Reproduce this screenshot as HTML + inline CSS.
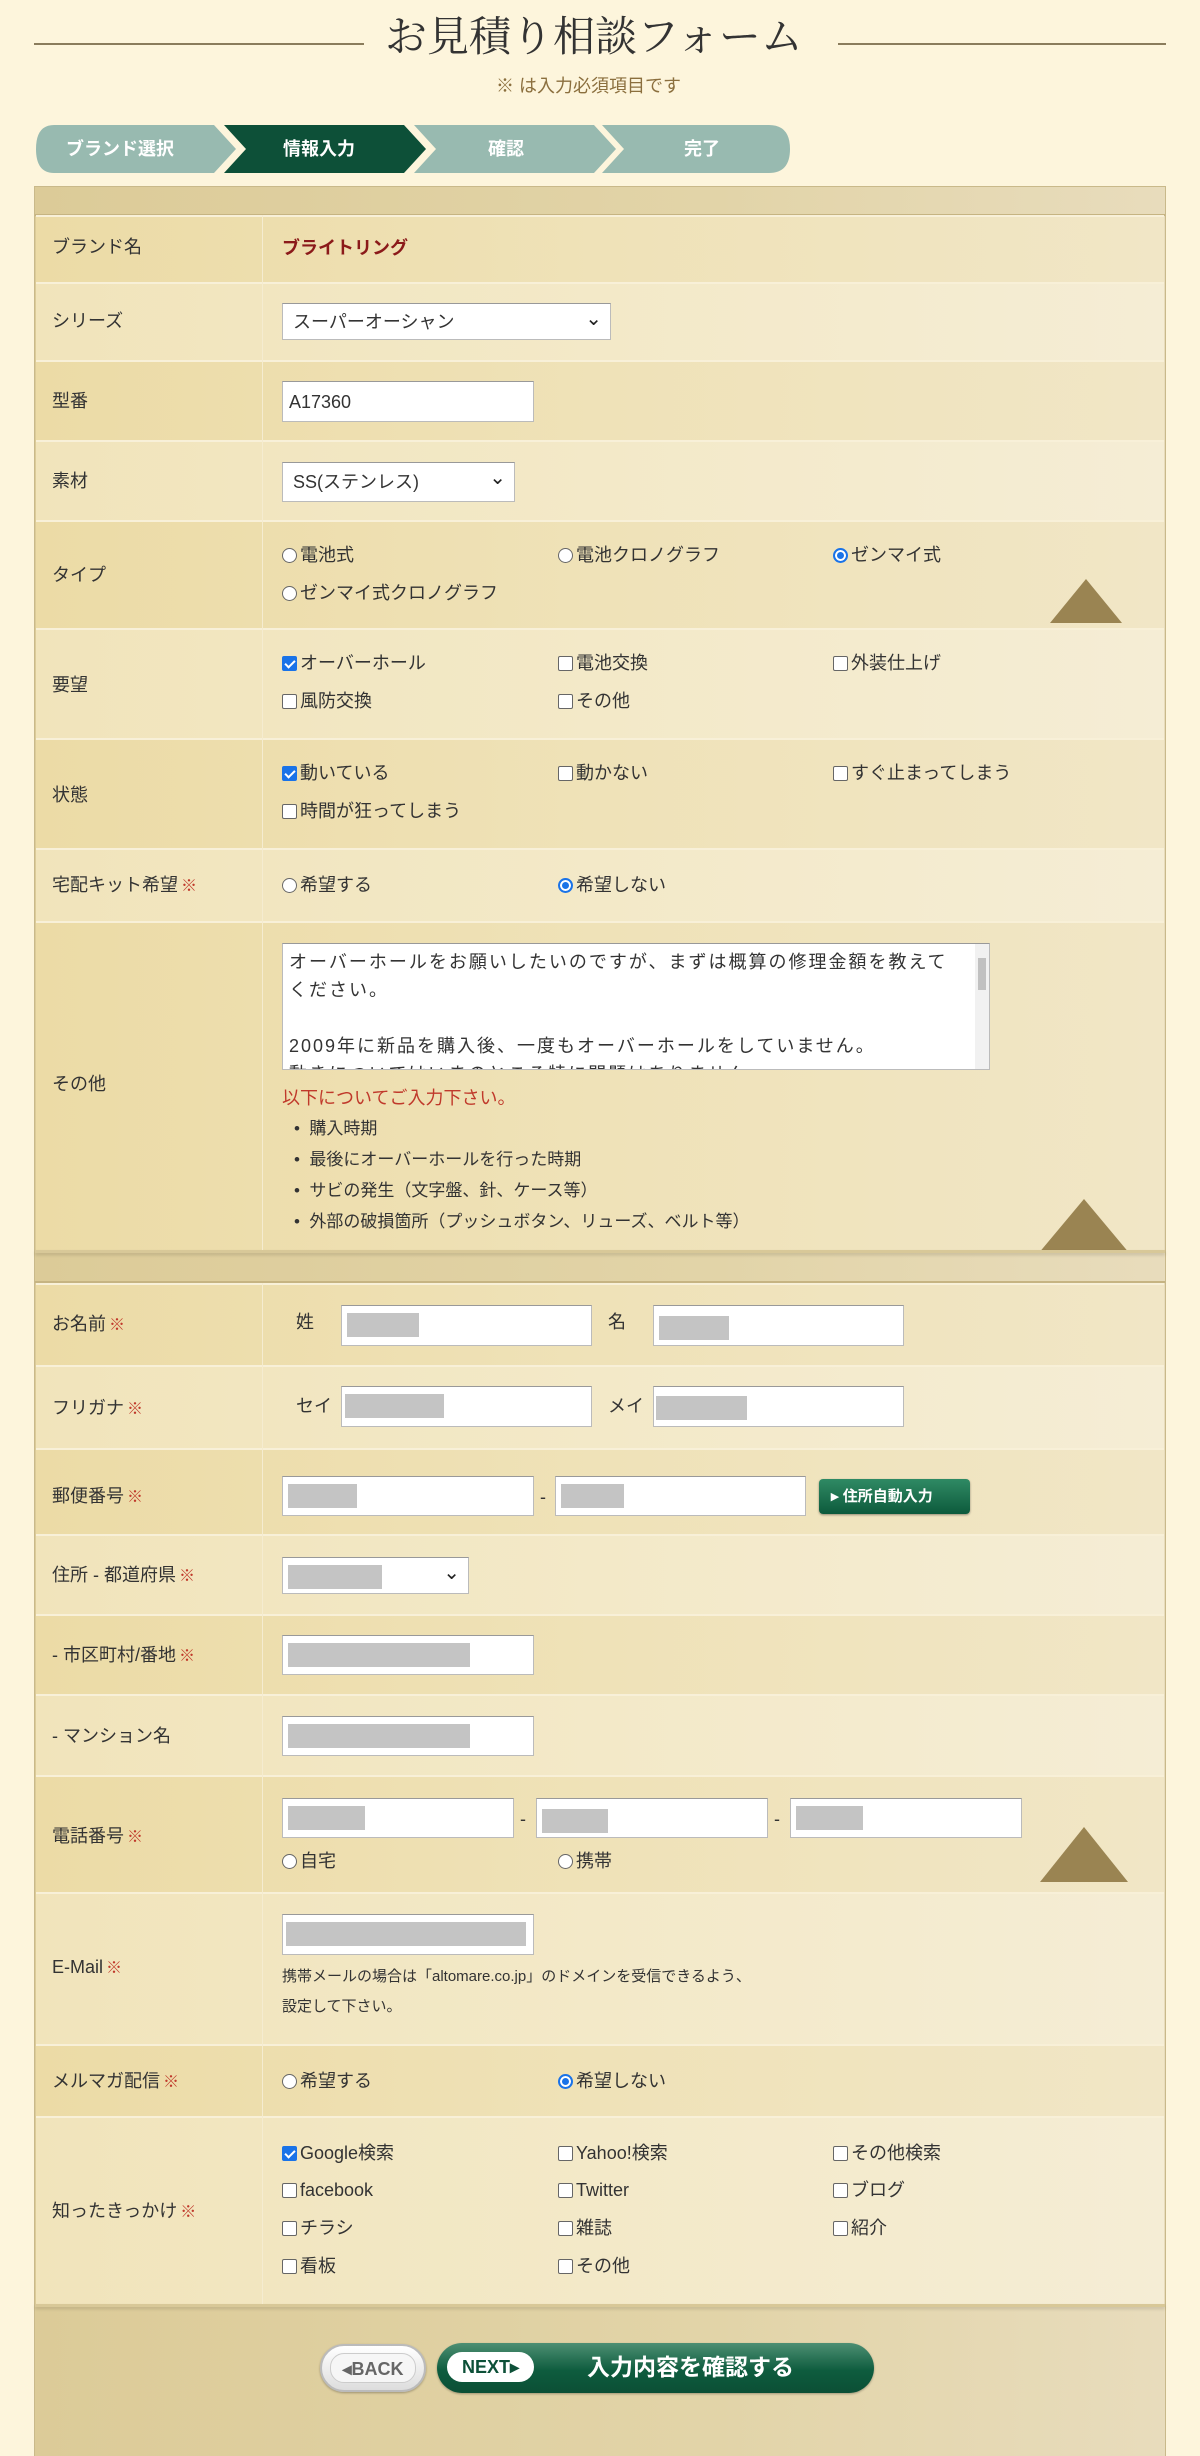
<!DOCTYPE html>
<html><head><meta charset="utf-8">
<style>
*{margin:0;padding:0;box-sizing:border-box}
body{width:1200px;height:2456px;background:#fdf5dc;font-family:"Liberation Sans","Noto Sans CJK JP",sans-serif;color:#333;position:relative;overflow:hidden}
.a{position:absolute}
.t{font-size:18px;white-space:nowrap;line-height:1}
.row{position:absolute;left:36px;width:1128px;border-top:2px solid #f8f0d8}
.d{background:linear-gradient(90deg,#ecdba6,#efe2b8 50%,#f1e6c6)}
.l{background:linear-gradient(90deg,#f1e4bb,#f3e9c8 50%,#f5edd5)}
.lab{position:absolute;left:16px;font-size:18px;white-space:nowrap;line-height:1}
.lab i{font-style:normal;color:#c0392b;font-size:16px;margin-left:3px}
.inp{position:absolute;background:#fff;border:1px solid #bbb;border-top-color:#999}
.g{position:absolute;left:5px;top:7px;height:24px;background:#c4c4c4}
.sel:after{content:"⌄";position:absolute;right:8px;top:2px;font-size:20px;color:#222}
.cb{display:inline-block;width:15px;height:15px;border:1px solid #666;border-radius:2px;background:#fff;vertical-align:-2px;margin-right:3px}
.cb.on{background:#1a73e8;border-color:#1a73e8;position:relative}
.cb.on:after{content:"";position:absolute;left:4px;top:1px;width:4px;height:8px;border:solid #fff;border-width:0 2px 2px 0;transform:rotate(45deg)}
.rd{display:inline-block;width:15px;height:15px;border:1px solid #666;border-radius:50%;background:#fff;vertical-align:-2px;margin-right:3px}
.rd.on{border:2px solid #1a73e8;box-shadow:inset 0 0 0 2px #fff;background:#1a73e8}
.tri{position:absolute;width:0;height:0;border-style:solid;border-color:transparent transparent #9a8452 transparent}
</style></head><body>

<div class="a" style="left:34px;top:43px;width:330px;height:2px;background:#8a7c5c"></div>
<div class="a" style="left:838px;top:43px;width:328px;height:2px;background:#8a7c5c"></div>
<div class="a t" style="left:385px;top:17px;font-size:42px;font-family:'Liberation Serif','Noto Serif CJK SC',serif;color:#333">お見積り相談フォーム</div>
<div class="a t" style="left:496px;top:77px;font-size:18px;color:#8b6f3e">※ は入力必須項目です</div>

<svg class="a" style="left:34px;top:123px" width="760" height="52">
<path d="M20 2 H180 L202 26 L180 50 H20 Q2 50 2 26 Q2 2 20 2Z" fill="#98bab0"/>
<path d="M190 2 H370 L392 26 L370 50 H190 L212 26Z" fill="#0d5038"/>
<path d="M380 2 H560 L582 26 L560 50 H380 L402 26Z" fill="#98bab0"/>
<path d="M568 2 H735 Q756 2 756 26 Q756 50 735 50 H568 L590 26Z" fill="#98bab0"/>
<text x="86" y="32" font-size="18" font-weight="bold" fill="#fff" text-anchor="middle" font-family="Liberation Sans,Noto Sans CJK JP,sans-serif">ブランド選択</text>
<text x="285" y="32" font-size="18" font-weight="bold" fill="#fff" text-anchor="middle" font-family="Liberation Sans,Noto Sans CJK JP,sans-serif">情報入力</text>
<text x="472" y="32" font-size="18" font-weight="bold" fill="#fff" text-anchor="middle" font-family="Liberation Sans,Noto Sans CJK JP,sans-serif">確認</text>
<text x="668" y="32" font-size="18" font-weight="bold" fill="#fff" text-anchor="middle" font-family="Liberation Sans,Noto Sans CJK JP,sans-serif">完了</text>
</svg>

<div class="a" style="left:34px;top:186px;width:1132px;height:2270px;background:linear-gradient(90deg,#dccb98,#e2d4a8 60%,#e8dcbc);border:1px solid #c9b98a;border-bottom:none"></div>
<div class="a" style="left:35px;top:214px;width:1130px;height:2px;background:#c6b482"></div>
<div class="a" style="left:262px;top:215px;width:1px;height:1035px;background:#f5ecd0;z-index:2"></div>

<div class="row d" style="top:215px;height:67px"><div class="lab" style="top:21px">ブランド名</div><div class="a t" style="left:246px;top:22px;color:#8b1a1a;font-weight:bold">ブライトリング</div></div>
<div class="row l" style="top:282px;height:78px"><div class="lab" style="top:28px">シリーズ</div>
 <div class="inp sel" style="left:246px;top:19px;width:329px;height:37px"><span class="a t" style="left:10px;top:9px">スーパーオーシャン</span></div></div>
<div class="row d" style="top:360px;height:80px"><div class="lab" style="top:30px">型番</div>
 <div class="inp" style="left:246px;top:19px;width:252px;height:41px"><span class="a t" style="left:6px;top:11px">A17360</span></div></div>
<div class="row l" style="top:440px;height:80px"><div class="lab" style="top:30px">素材</div>
 <div class="inp sel" style="left:246px;top:20px;width:233px;height:40px"><span class="a t" style="left:10px;top:10px">SS(ステンレス)</span></div></div>
<div class="row d" style="top:520px;height:108px"><div class="lab" style="top:44px">タイプ</div>
 <div class="a t" style="left:246px;top:24px"><span class="rd"></span>電池式</div>
 <div class="a t" style="left:522px;top:24px"><span class="rd"></span>電池クロノグラフ</div>
 <div class="a t" style="left:797px;top:24px"><span class="rd on"></span>ゼンマイ式</div>
 <div class="a t" style="left:246px;top:62px"><span class="rd"></span>ゼンマイ式クロノグラフ</div>
 <div class="tri" style="left:1014px;top:57px;border-width:0 36px 44px 36px"></div></div>
<div class="row l" style="top:628px;height:110px"><div class="lab" style="top:46px">要望</div>
 <div class="a t" style="left:246px;top:24px"><span class="cb on"></span>オーバーホール</div>
 <div class="a t" style="left:522px;top:24px"><span class="cb"></span>電池交換</div>
 <div class="a t" style="left:797px;top:24px"><span class="cb"></span>外装仕上げ</div>
 <div class="a t" style="left:246px;top:62px"><span class="cb"></span>風防交換</div>
 <div class="a t" style="left:522px;top:62px"><span class="cb"></span>その他</div></div>
<div class="row d" style="top:738px;height:110px"><div class="lab" style="top:46px">状態</div>
 <div class="a t" style="left:246px;top:24px"><span class="cb on"></span>動いている</div>
 <div class="a t" style="left:522px;top:24px"><span class="cb"></span>動かない</div>
 <div class="a t" style="left:797px;top:24px"><span class="cb"></span>すぐ止まってしまう</div>
 <div class="a t" style="left:246px;top:62px"><span class="cb"></span>時間が狂ってしまう</div></div>
<div class="row l" style="top:848px;height:73px"><div class="lab" style="top:26px">宅配キット希望<i>※</i></div>
 <div class="a t" style="left:246px;top:26px"><span class="rd"></span>希望する</div>
 <div class="a t" style="left:522px;top:26px"><span class="rd on"></span>希望しない</div></div>
<div class="row d" style="top:921px;height:329px;overflow:hidden"><div class="lab" style="top:152px">その他</div>
 <div class="inp" style="left:246px;top:20px;width:708px;height:127px;overflow:hidden;font-size:18px;letter-spacing:2px;line-height:28px;padding:4px 26px 0 6px">オーバーホールをお願いしたいのですが、まずは概算の修理金額を教えてください。<br><br>2009年に新品を購入後、一度もオーバーホールをしていません。<br>動きについてはいまのところ特に問題はありません。
  <div class="a" style="right:0;top:0;width:14px;height:125px;background:#f1f1f1"><div class="a" style="left:3px;top:14px;width:8px;height:32px;background:#c1c1c1"></div></div></div>
 <div class="a t" style="left:246px;top:166px;color:#c0392b">以下についてご入力下さい。</div>
 <div class="a" style="left:258px;top:190px;font-size:17px;line-height:31px;white-space:nowrap">
  <div>•&nbsp;&nbsp;購入時期</div><div>•&nbsp;&nbsp;最後にオーバーホールを行った時期</div><div>•&nbsp;&nbsp;サビの発生（文字盤、針、ケース等）</div><div>•&nbsp;&nbsp;外部の破損箇所（プッシュボタン、リューズ、ベルト等）</div></div>
 <div class="tri" style="left:1002px;top:276px;border-width:0 46px 55px 46px"></div></div>
<div class="a" style="left:35px;top:1250px;width:1130px;height:3px;background:#d8c898;box-shadow:0 2px 3px rgba(0,0,0,.15)"></div>
<div class="a" style="left:35px;top:1281px;width:1130px;height:2px;background:#c6b482"></div>
<div class="a" style="left:262px;top:1283px;width:1px;height:1021px;background:#f5ecd0;z-index:2"></div>

<div class="row d" style="top:1283px;height:82px"><div class="lab" style="top:30px">お名前<i>※</i></div>
 <div class="a t" style="left:260px;top:28px">姓</div>
 <div class="inp" style="left:305px;top:20px;width:251px;height:41px"><div class="g" style="width:72px"></div></div>
 <div class="a t" style="left:572px;top:28px">名</div>
 <div class="inp" style="left:617px;top:20px;width:251px;height:41px"><div class="g" style="width:70px;top:10px"></div></div></div>
<div class="row l" style="top:1365px;height:83px"><div class="lab" style="top:32px">フリガナ<i>※</i></div>
 <div class="a t" style="left:260px;top:30px">セイ</div>
 <div class="inp" style="left:305px;top:19px;width:251px;height:41px"><div class="g" style="width:99px;left:3px"></div></div>
 <div class="a t" style="left:572px;top:30px">メイ</div>
 <div class="inp" style="left:617px;top:19px;width:251px;height:41px"><div class="g" style="width:91px;left:2px;top:9px"></div></div></div>
<div class="row d" style="top:1448px;height:86px"><div class="lab" style="top:37px">郵便番号<i>※</i></div>
 <div class="inp" style="left:246px;top:26px;width:252px;height:40px"><div class="g" style="width:69px"></div></div>
 <div class="a t" style="left:504px;top:38px">-</div>
 <div class="inp" style="left:519px;top:26px;width:251px;height:40px"><div class="g" style="width:63px"></div></div>
 <div class="a" style="left:783px;top:29px;width:151px;height:35px;border-radius:4px;background:linear-gradient(#2f8a64,#0d5a3c);box-shadow:0 1px 2px rgba(0,0,0,.4);color:#fff;font-size:15px;font-weight:bold;line-height:35px;padding-left:12px;white-space:nowrap">▸ 住所自動入力</div></div>
<div class="row l" style="top:1534px;height:80px"><div class="lab" style="top:30px">住所 - 都道府県<i>※</i></div>
 <div class="inp sel" style="left:246px;top:21px;width:187px;height:37px"><div class="g" style="width:94px"></div></div></div>
<div class="row d" style="top:1614px;height:80px"><div class="lab" style="top:30px">- 市区町村/番地<i>※</i></div>
 <div class="inp" style="left:246px;top:19px;width:252px;height:40px"><div class="g" style="width:182px"></div></div></div>
<div class="row l" style="top:1694px;height:81px"><div class="lab" style="top:31px">- マンション名</div>
 <div class="inp" style="left:246px;top:20px;width:252px;height:40px"><div class="g" style="width:182px"></div></div></div>
<div class="row d" style="top:1775px;height:117px"><div class="lab" style="top:50px">電話番号<i>※</i></div>
 <div class="inp" style="left:246px;top:21px;width:232px;height:40px"><div class="g" style="width:77px"></div></div>
 <div class="a t" style="left:484px;top:33px">-</div>
 <div class="inp" style="left:500px;top:21px;width:232px;height:40px"><div class="g" style="width:66px;top:10px"></div></div>
 <div class="a t" style="left:738px;top:33px">-</div>
 <div class="inp" style="left:754px;top:21px;width:232px;height:40px"><div class="g" style="width:67px"></div></div>
 <div class="a t" style="left:246px;top:75px"><span class="rd"></span>自宅</div>
 <div class="a t" style="left:522px;top:75px"><span class="rd"></span>携帯</div>
 <div class="tri" style="left:1004px;top:50px;border-width:0 44px 55px 44px"></div></div>
<div class="row l" style="top:1892px;height:152px"><div class="lab" style="top:64px">E-Mail<i>※</i></div>
 <div class="inp" style="left:246px;top:20px;width:252px;height:41px"><div class="g" style="width:240px;left:3px"></div></div>
 <div class="a t" style="left:246px;top:75px;font-size:15px">携帯メールの場合は「altomare.co.jp」のドメインを受信できるよう、</div>
 <div class="a t" style="left:246px;top:105px;font-size:15px">設定して下さい。</div></div>
<div class="row d" style="top:2044px;height:72px"><div class="lab" style="top:26px">メルマガ配信<i>※</i></div>
 <div class="a t" style="left:246px;top:26px"><span class="rd"></span>希望する</div>
 <div class="a t" style="left:522px;top:26px"><span class="rd on"></span>希望しない</div></div>
<div class="row l" style="top:2116px;height:188px"><div class="lab" style="top:84px">知ったきっかけ<i>※</i></div>
 <div class="a t" style="left:246px;top:26px"><span class="cb on"></span>Google検索</div>
 <div class="a t" style="left:522px;top:26px"><span class="cb"></span>Yahoo!検索</div>
 <div class="a t" style="left:797px;top:26px"><span class="cb"></span>その他検索</div>
 <div class="a t" style="left:246px;top:63px"><span class="cb"></span>facebook</div>
 <div class="a t" style="left:522px;top:63px"><span class="cb"></span>Twitter</div>
 <div class="a t" style="left:797px;top:63px"><span class="cb"></span>ブログ</div>
 <div class="a t" style="left:246px;top:101px"><span class="cb"></span>チラシ</div>
 <div class="a t" style="left:522px;top:101px"><span class="cb"></span>雑誌</div>
 <div class="a t" style="left:797px;top:101px"><span class="cb"></span>紹介</div>
 <div class="a t" style="left:246px;top:139px"><span class="cb"></span>看板</div>
 <div class="a t" style="left:522px;top:139px"><span class="cb"></span>その他</div></div>
<div class="a" style="left:35px;top:2304px;width:1130px;height:3px;background:#d8c898;box-shadow:0 2px 3px rgba(0,0,0,.15)"></div>

<div class="a" style="left:320px;top:2344px;width:106px;height:48px;border-radius:24px;background:linear-gradient(#fff,#ddd);border:2px solid #bbb;box-shadow:0 1px 2px rgba(0,0,0,.3)"><div class="a" style="left:8px;top:7px;width:86px;height:30px;border-radius:14px;background:#f6f6f6;border:1px solid #ccc;text-align:center;font-size:18px;font-weight:bold;line-height:30px;color:#666">◂BACK</div></div>
<div class="a" style="left:437px;top:2343px;width:437px;height:50px;border-radius:25px;background:linear-gradient(#4d8f73,#0e5c3e 55%,#0b4f35);box-shadow:0 1px 2px rgba(0,0,0,.3)">
 <div class="a" style="left:10px;top:9px;width:87px;height:30px;border-radius:15px;background:#fff;color:#0d5038;font-size:18px;font-weight:bold;line-height:30px;text-align:center">NEXT▸</div>
 <div class="a t" style="left:150px;top:13px;color:#fff;font-size:23px;font-weight:bold">入力内容を確認する</div></div>
</body></html>
